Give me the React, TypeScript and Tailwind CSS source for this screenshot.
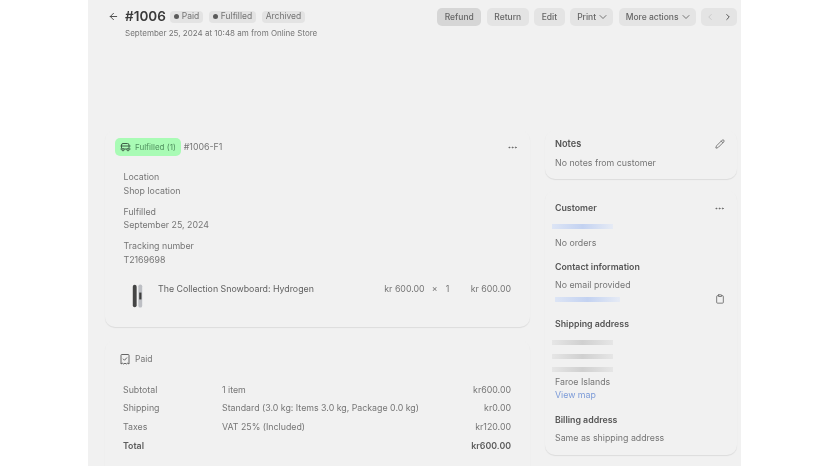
import React from 'react';
import { ArrowLeft, ChevronDown, ChevronLeft, ChevronRight, Clipboard, Ellipsis, Pencil } from 'lucide-react';

const Badge = ({ label, dot }: { label: string; dot?: boolean }) => (
  <span className="flex h-[12px] items-center gap-[3px] rounded-[4px] bg-[#e3e3e3] px-[4px] text-[8.5px] text-[#737373]">
    {dot && <span className="h-[5px] w-[5px] rounded-full bg-[#5a5a5a]" />}
    {label}
  </span>
);

const ActionButton = ({ label, active, menu }: { label: string; active?: boolean; menu?: boolean }) => (
  <button
    className={`flex h-[18px] items-center gap-[1px] rounded-[5px] text-[8.5px] font-medium text-[#666666] ${
      menu ? 'pl-[7px] pr-[4px]' : 'px-[7.5px]'
    } ${active ? 'bg-[#d6d6d6]' : 'bg-[#e4e4e4]'}`}
  >
    {label}
    {menu && <ChevronDown size={12} strokeWidth={1.8} />}
  </button>
);

const Card = ({ className, children }: { className: string; children: React.ReactNode }) => (
  <section className={`rounded-[10px] bg-[#f1f1f1] shadow-[0_1px_1px_rgba(0,0,0,0.09)] ${className}`}>{children}</section>
);

const Info = ({ label, value }: { label: string; value: string }) => (
  <div className="leading-[13.5px]">
    <div>{label}</div>
    <div>{value}</div>
  </div>
);

const Smudge = ({ width, blue }: { width: string; blue?: boolean }) => (
  <div
    className={`h-[5px] bg-gradient-to-r blur-[0.5px] ${width} ${
      blue ? 'from-[#dde5f5] via-[#c3d2f1] to-[#e6ebf5]' : 'from-[#e6e6e6] via-[#d0d0d0] to-[#e6e6e6]'
    }`}
  />
);

const Truck = () => (
  <svg width="11" height="10" viewBox="0 0 22 18" fill="none" stroke="#3f5f48" strokeWidth="2" className="h-[10px] w-[11px]">
    <path d="M3 12V5a3 3 0 0 1 3-3h9a3 3 0 0 1 3 3v7" />
    <path d="M1 7h20M1 13h20" />
    <circle cx="6" cy="14.5" r="2.2" fill="#a9fbb5" />
    <circle cx="16" cy="14.5" r="2.2" fill="#a9fbb5" />
  </svg>
);

const ReceiptCheck = () => (
  <svg viewBox="0 0 20 22" fill="none" stroke="#555555" strokeWidth="1.8" className="h-[11px] w-[10px]">
    <path d="M2 2.5A1.5 1.5 0 0 1 3.5 1h13A1.5 1.5 0 0 1 18 2.5V20l-2.7-1.6L12.7 20 10 18.4 7.3 20l-2.6-1.6L2 20z" />
    <path d="m6 9.5 3 3 5-5.5" />
  </svg>
);

const Board = () => (
  <svg viewBox="0 0 12 28" className="h-[24px] w-[11px]">
    <rect x="0.5" y="1" width="4.5" height="26" rx="2.2" fill="#454545" />
    <rect x="7" y="0.5" width="4.5" height="27" rx="2.2" fill="#bdbfc4" />
    <rect x="8" y="10" width="2.6" height="8" fill="#3d3d3d" />
  </svg>
);

const totals = [
  { label: 'Subtotal', detail: '1 item', amount: 'kr600.00' },
  { label: 'Shipping', detail: 'Standard (3.0 kg: Items 3.0 kg, Package 0.0 kg)', amount: 'kr0.00' },
  { label: 'Taxes', detail: 'VAT 25% (Included)', amount: 'kr120.00' },
];

const App = () => {
  return (
    <div className="h-[466px] overflow-hidden bg-white font-['Inter',sans-serif] text-[8.8px] text-[#757575] blur-[0.4px]">
      <main className="ml-[88px] flex h-[466px] w-[653px] flex-col overflow-hidden bg-[#f1f1f1] pl-[17px] pr-[4px]">
        <header className="flex h-[130px] shrink-0 items-start justify-between pl-[3px] pt-[7px]">
          <div>
            <div className="flex h-[19px] items-center">
              <ArrowLeft size={11} strokeWidth={2} className="text-[#444444]" />
              <h1 className="ml-[6px] mr-[4px] text-[13.5px] font-semibold text-[#3a3a3a]">#1006</h1>
              <div className="flex gap-[5.5px]">
                <Badge label="Paid" dot />
                <Badge label="Fulfilled" dot />
                <Badge label="Archived" />
              </div>
            </div>
            <p className="ml-[17px] mt-[1px] text-[8px] leading-[12px]">September 25, 2024 at 10:48 am from Online Store</p>
          </div>
          <div className="flex gap-[5.5px] pt-[1px]">
            <ActionButton label="Refund" active />
            <ActionButton label="Return" />
            <ActionButton label="Edit" />
            <ActionButton label="Print" menu />
            <ActionButton label="More actions" menu />
            <div className="flex h-[18px] items-center gap-[8px] rounded-[5px] bg-[#e4e4e4] px-[4px] text-[#555555]">
              <ChevronLeft size={10} className="text-[#c4c4c4]" />
              <ChevronRight size={10} strokeWidth={2.4} />
            </div>
          </div>
        </header>

        <div className="flex gap-[15px]">
          <div className="flex w-[425px] flex-col gap-[13px]">
            <Card className="h-[197px] pl-[10px] pr-[12px] pt-[8px]">
              <div className="flex items-center justify-between">
                <div className="flex items-center gap-[3px]">
                  <span className="flex h-[18px] items-center gap-[4px] rounded-[5px] bg-[#a9fbb5] pl-[5px] pr-[5px] text-[8px] text-[#4f8f5e]">
                    <Truck />
                    Fulfilled (1)
                  </span>
                  <span>#1006-F1</span>
                </div>
                <Ellipsis size={11} className="text-[#666666]" />
              </div>
              <div className="ml-[8.5px] mt-[14px] flex flex-col gap-[7.5px]">
                <Info label="Location" value="Shop location" />
                <Info label="Fulfilled" value="September 25, 2024" />
                <Info label="Tracking number" value="T2169698" />
              </div>
              <div className="ml-[17px] mt-[18px] flex items-start">
                <Board />
                <span className="ml-[15px] mt-[-2px] text-[#5f5f5f]">The Collection Snowboard: Hydrogen</span>
                <span className="ml-auto mr-[7px] mt-[-2px] flex">
                  <span>kr 600.00</span>
                  <span className="ml-[7px] w-[14px]">×</span>
                  <span className="w-[25px]">1</span>
                  <span>kr 600.00</span>
                </span>
              </div>
            </Card>
            <Card className="h-[160px] pl-[15px] pr-[19px] pt-[13px]">
              <div className="flex items-center gap-[5px] text-[8.5px]">
                <ReceiptCheck />
                Paid
              </div>
              <div className="ml-[3px] mt-[17px] flex flex-col gap-[5.2px] leading-[13.5px]">
                {totals.map((row) => (
                  <div key={row.label} className="flex">
                    <span className="w-[99px]">{row.label}</span>
                    <span>{row.detail}</span>
                    <span className="ml-auto">{row.amount}</span>
                  </div>
                ))}
                <div className="flex justify-between font-semibold text-[#5c5c5c]">
                  <span>Total</span>
                  <span>kr600.00</span>
                </div>
              </div>
            </Card>
          </div>

          <div className="flex w-[192px] flex-col gap-[11px]">
            <Card className="h-[49px] pl-[10px] pr-[12px] pt-[7px]">
              <div className="flex items-center justify-between">
                <h2 className="text-[9.2px] font-semibold leading-[14px] text-[#555555]">Notes</h2>
                <Pencil size={10} className="text-[#666666]" />
              </div>
              <p className="mt-[5px] leading-[13px]">No notes from customer</p>
            </Card>
            <Card className="h-[265px] pl-[10px] pr-[12px] pt-[11px]">
              <div className="flex items-center justify-between">
                <h2 className="font-semibold leading-[14px] text-[#555555]">Customer</h2>
                <Ellipsis size={11} className="text-[#666666]" />
              </div>
              <div className="-ml-[3px] mt-[9px]"><Smudge width="w-[61px]" blue /></div>
              <p className="mt-[7px] leading-[13px]">No orders</p>
              <h3 className="mt-[11px] font-semibold leading-[14px] text-[#555555]">Contact information</h3>
              <p className="mt-[4px] leading-[13px]">No email provided</p>
              <div className="mt-[3px] flex items-center justify-between">
                <Smudge width="w-[65px]" blue />
                <Clipboard size={10} className="text-[#666666]" />
              </div>
              <h3 className="mt-[13px] font-semibold leading-[14px] text-[#555555]">Shipping address</h3>
              <div className="-ml-[3px] mt-[9px] flex flex-col gap-[8.5px]">
                <Smudge width="w-[61px]" />
                <Smudge width="w-[61px]" />
                <Smudge width="w-[61px]" />
              </div>
              <p className="mt-[3px] leading-[13px]">Faroe Islands</p>
              <a className="block leading-[13.5px] text-[#7c9bd8]">View map</a>
              <h3 className="mt-[11px] font-semibold leading-[14px] text-[#555555]">Billing address</h3>
              <p className="mt-[4px] leading-[13px]">Same as shipping address</p>
            </Card>
          </div>
        </div>
      </main>
    </div>
  );
};

export default App;
